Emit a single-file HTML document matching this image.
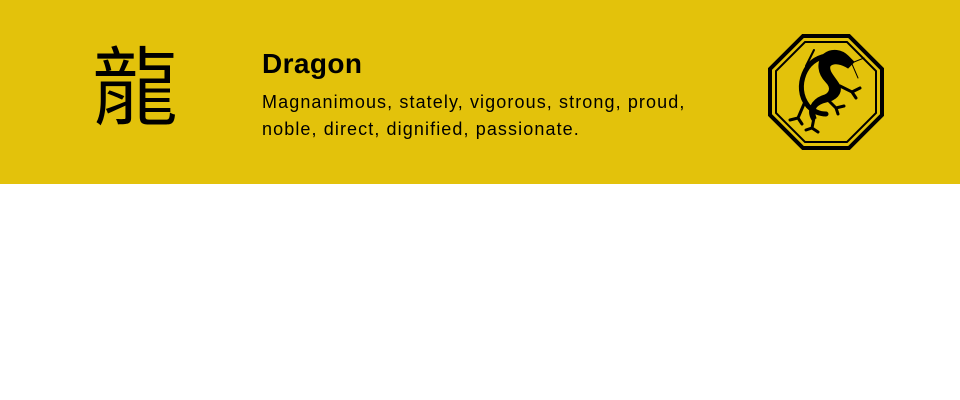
<!DOCTYPE html>
<html><head><style>
body{margin:0;width:960px;height:400px;background:#fff;font-family:"Liberation Sans",sans-serif;}
.band{position:absolute;left:0;top:0;width:960px;height:184px;background:#e3c20b;}
.k{position:absolute;left:92px;top:38px;font:350 86px/1 "Noto Sans CJK TC","Noto Sans CJK SC",sans-serif;color:#000;}
h1{position:absolute;left:262px;top:48px;margin:0;font-size:28px;letter-spacing:0.4px;font-weight:bold;color:#000;}
p{position:absolute;left:262px;top:89px;margin:0;font-size:18px;letter-spacing:1.1px;line-height:27px;color:#000;width:600px;}
svg{position:absolute;left:768px;top:34px;}
</style></head><body>
<div class="band"></div>
<div class="k">龍</div>
<h1>Dragon</h1>
<p>Magnanimous, stately, vigorous, strong, proud,<br>noble, direct, dignified, passionate.</p>
<svg width="116" height="116" viewBox="0 0 116 116">
<polygon points="35,2 81,2 114,35 114,81 81,114 35,114 2,81 2,35" fill="none" stroke="#000" stroke-width="4"/>
<polygon points="37,8 79,8 108,37 108,79 79,108 37,108 8,79 8,37" fill="none" stroke="#000" stroke-width="2"/>
<g fill="#000" stroke="#000" stroke-linecap="round">
<path d="M56,20 C64,14 74,16 80,22 L86,28 L80,34 C74,30 66,28 62,32 C60,38 68,44 72,52 C74,60 68,66 58,68 C50,70 44,74 48,84 L44,86 C38,76 44,66 54,62 C62,60 64,54 58,48 C50,40 48,28 56,20Z"/>
<path d="M58,22 C48,24 40,30 36,40 C32,50 32,62 40,72 C46,78 52,80 58,80" fill="none" stroke-width="5"/>
<path d="M38,32 L46,16" fill="none" stroke-width="2"/>
<path d="M86,28 L96,24 M84,30 L90,44" fill="none" stroke-width="1"/>
<path d="M72,52 L84,58 L92,54 M84,58 L88,64" fill="none" stroke-width="3"/>
<path d="M60,66 L68,74 L76,72 M68,74 L70,80" fill="none" stroke-width="3"/>
<path d="M46,84 L44,94 M44,94 L38,96 M44,94 L50,98" fill="none" stroke-width="3"/>
<path d="M36,70 L30,84 L22,86 M30,84 L34,90" fill="none" stroke-width="3"/>
</g>
</svg>
</body></html>
